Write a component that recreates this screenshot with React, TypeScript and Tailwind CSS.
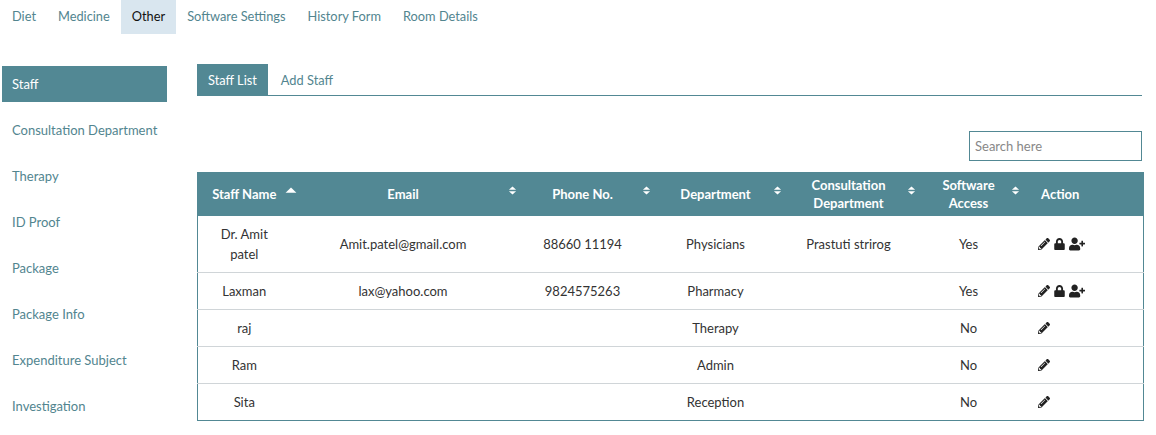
import React from 'react';
import { FaPencilAlt, FaLock, FaUserPlus } from 'react-icons/fa';

const topTabs = ['Diet', 'Medicine', 'Other', 'Software Settings', 'History Form', 'Room Details'];
const sideItems = ['Staff', 'Consultation Department', 'Therapy', 'ID Proof', 'Package', 'Package Info', 'Expenditure Subject', 'Investigation'];

const columns = [
  { label: 'Staff Name', width: 'w-[93px]', sort: 'absolute right-[-6px] top-[13px] w-[12px] h-[12px]', active: true },
  { label: 'Email', width: 'w-[225px]', sort: 'absolute right-[-1px] top-[14px] w-[9px] h-[9px]' },
  { label: 'Phone No.', width: 'w-[134px]', sort: 'absolute right-[-1px] top-[14px] w-[9px] h-[9px]' },
  { label: 'Department', width: 'w-[132px]', sort: 'absolute right-0 top-[14px] w-[9px] h-[9px]' },
  { label: 'Consultation Department', width: 'w-[134px]', sort: 'absolute right-0 top-[14px] w-[9px] h-[9px]' },
  { label: 'Software Access', width: 'w-[106px]', sort: 'absolute right-[2px] top-[14px] w-[9px] h-[9px]' },
];

const rows = [
  { name: 'Dr. Amit patel', email: 'Amit.patel@gmail.com', phone: '88660 11194', dept: 'Physicians', consult: 'Prastuti strirog', access: 'Yes', full: true },
  { name: 'Laxman', email: 'lax@yahoo.com', phone: '9824575263', dept: 'Pharmacy', consult: '', access: 'Yes', full: true },
  { name: 'raj', email: '', phone: '', dept: 'Therapy', consult: '', access: 'No', full: false },
  { name: 'Ram', email: '', phone: '', dept: 'Admin', consult: '', access: 'No', full: false },
  { name: 'Sita', email: '', phone: '', dept: 'Reception', consult: '', access: 'No', full: false },
];

const SortIcon = ({ active, className }: { active?: boolean; className: string }) => (
  <svg viewBox="0 0 10 10" className={className} fill="currentColor">
    {active ? (
      <path d="M0.5 6.5 L5 2 L9.5 6.5 Z" />
    ) : (
      <>
        <path d="M1 4.2 L5 0.6 L9 4.2 Z" />
        <path d="M1 5.8 L5 9.4 L9 5.8 Z" />
      </>
    )}
  </svg>
);

const App: React.FC = () => {
  return (
    <div className="w-[1156px] h-[435px] overflow-hidden bg-white text-[13px] text-[#333]" style={{ fontFamily: '"Lato", "Liberation Sans", sans-serif' }}>
      <div className="flex h-[34px] pl-[1px] text-[12.8px]">
        {topTabs.map((t) => (
          <div
            key={t}
            className={
              t === 'Other'
                ? 'h-full px-[11px] pb-[1px] flex items-center bg-[#d9e6ef] text-[#111]'
                : 'h-full px-[11px] pb-[1px] flex items-center text-[#52858f]'
            }
          >
            {t}
          </div>
        ))}
      </div>

      <div className="flex pt-[30px] pl-[2px]">
        <div className="w-[165px] shrink-0 flex flex-col gap-[10px] pt-[2px]">
          {sideItems.map((s, i) => (
            <div
              key={s}
              className={
                i === 0
                  ? 'h-[36px] pl-[10px] pt-[2px] flex items-center bg-[#528894] text-white'
                  : 'h-[36px] pl-[10px] pt-[2px] flex items-center text-[#52858f]'
              }
            >
              {s}
            </div>
          ))}
        </div>

        <div className="ml-[30px] w-[947px]">
          <div className="w-[945px] flex h-[32px] border-b border-[#528894] text-[12.8px]">
            <div className="h-[31px] px-[11px] pt-[2px] flex items-center bg-[#528894] text-white">Staff List</div>
            <div className="h-[31px] px-[13px] pt-[2px] flex items-center text-[#52858f]">Add Staff</div>
          </div>

          <div className="w-[945px] flex justify-end mt-[35px] mb-[11px]">
            <input
              placeholder="Search here"
              className="w-[173px] h-[30px] px-[5px] border border-[#528894] outline-none placeholder:text-[#888]"
            />
          </div>

          <table className="table-fixed w-[947px] border-collapse border-x border-b border-[#528894]">
            <thead>
              <tr className="h-[44px] bg-[#528894] text-white">
                {columns.map((c) => (
                  <th key={c.label} className={`${c.width} px-3 font-bold leading-[18px] text-center relative`}>
                    {c.label}
                    <SortIcon active={c.active} className={c.sort} />
                  </th>
                ))}
                <th className="pl-0 pr-[44px] font-bold leading-[20px] text-center">Action</th>
              </tr>
            </thead>
            <tbody>
              {rows.map((r, i) => (
                <tr key={r.name} className={i === 0 ? 'h-[56px] border-b border-[#d0d5d8]' : i === 4 ? 'h-[37px]' : 'h-[37px] border-b border-[#d0d5d8]'}>
                  <td className="px-3 text-center leading-[20px]">{r.name}</td>
                  <td className="px-3 text-center leading-[20px]">{r.email}</td>
                  <td className="px-3 text-center leading-[20px]">{r.phone}</td>
                  <td className="px-3 text-center leading-[20px]">{r.dept}</td>
                  <td className="px-3 text-center leading-[20px]">{r.consult}</td>
                  <td className="px-3 text-center leading-[20px]">{r.access}</td>
                  <td className="pl-[16px] pt-[1px]">
                    <div className="flex items-center gap-[4px] text-[#222]">
                      <FaPencilAlt className="w-[12px] h-[12px]" />
                      {r.full && <FaLock className="w-[11px] h-[12px]" />}
                      {r.full && <FaUserPlus className="w-[16px] h-[14px]" />}
                    </div>
                  </td>
                </tr>
              ))}
            </tbody>
          </table>
        </div>
      </div>
    </div>
  );
};

export default App;
